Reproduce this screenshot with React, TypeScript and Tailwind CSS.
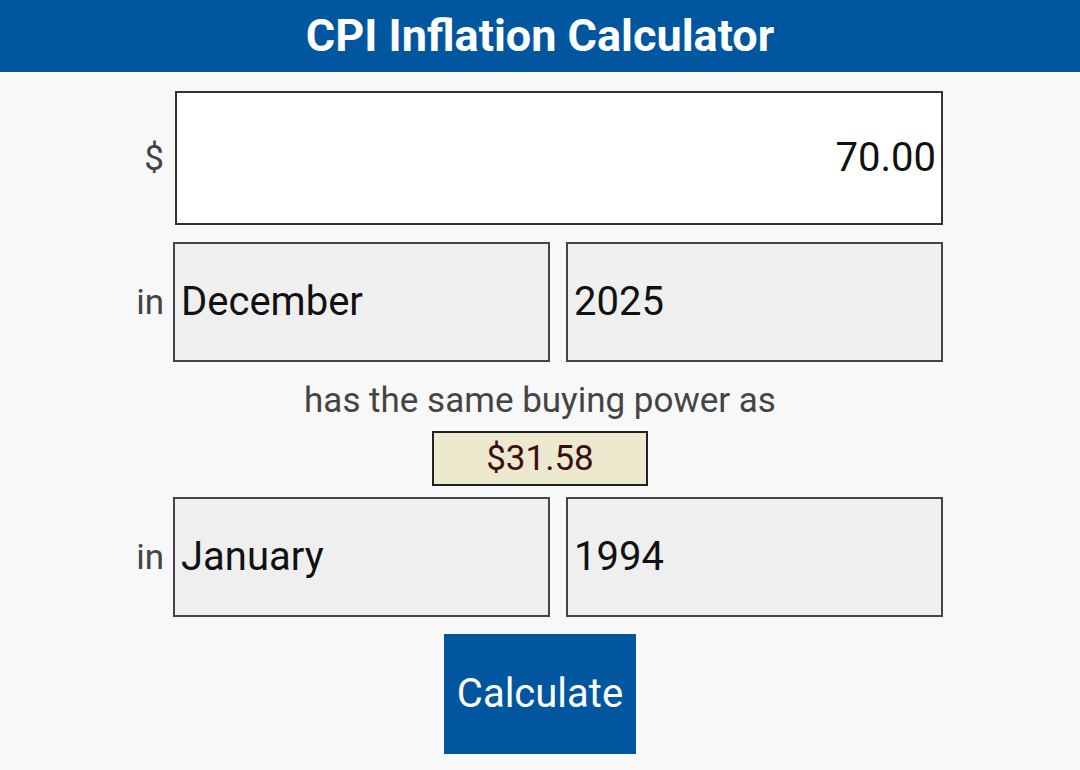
import React from "react";

const font = { fontFamily: "Roboto, 'Noto Sans', Arial, sans-serif" };

function Label({ children }: { children: React.ReactNode }) {
  return (
    <div className="w-[38px] shrink-0 pr-[10px] text-right text-[35px] text-[#444444] leading-none">
      {children}
    </div>
  );
}

function SelectBox({ value }: { value: string }) {
  return (
    <div className="flex h-[120px] w-[377px] items-center border-2 border-[#454545] bg-[#efefef] pl-[6px] text-[40px] text-[#111111] leading-none">
      {value}
    </div>
  );
}

export default function App() {
  return (
    <div className="min-h-[770px] w-full bg-[#f8f8f8]" style={font}>
      <div className="flex h-[72px] items-center justify-center bg-[#01579f] text-[45px] font-bold text-white">
        CPI Inflation Calculator
      </div>
      <div className="mx-auto flex w-[808px] flex-col pt-[19px]">
        <div className="flex items-center">
          <Label>$</Label>
          <div className="ml-[1px] flex h-[134px] w-[768px] items-center justify-end border-2 border-[#333333] bg-white pr-[5px] text-[40px] text-[#111111] leading-none">
            70.00
          </div>
        </div>
        <div className="mt-[17px] flex items-center">
          <Label>in</Label>
          <div className="-ml-[1px] flex gap-[16px]">
            <SelectBox value="December" />
            <SelectBox value="2025" />
          </div>
        </div>
        <div className="mt-[19px] flex justify-center text-[35px] leading-[40px] text-[#444444]">
          has the same buying power as
        </div>
        <div className="mt-[10px] flex justify-center">
          <div className="flex h-[55px] w-[216px] items-center justify-center border-2 border-[#222222] bg-[#ede9cf] text-[35px] leading-none text-[#3b0f0f]">
            $31.58
          </div>
        </div>
        <div className="mt-[11px] flex items-center">
          <Label>in</Label>
          <div className="-ml-[1px] flex gap-[16px]">
            <SelectBox value="January" />
            <SelectBox value="1994" />
          </div>
        </div>
        <div className="mt-[17px] flex justify-center">
          <div className="flex h-[120px] w-[192px] items-center justify-center bg-[#01579f] text-[40px] text-white leading-none">
            Calculate
          </div>
        </div>
      </div>
    </div>
  );
}
